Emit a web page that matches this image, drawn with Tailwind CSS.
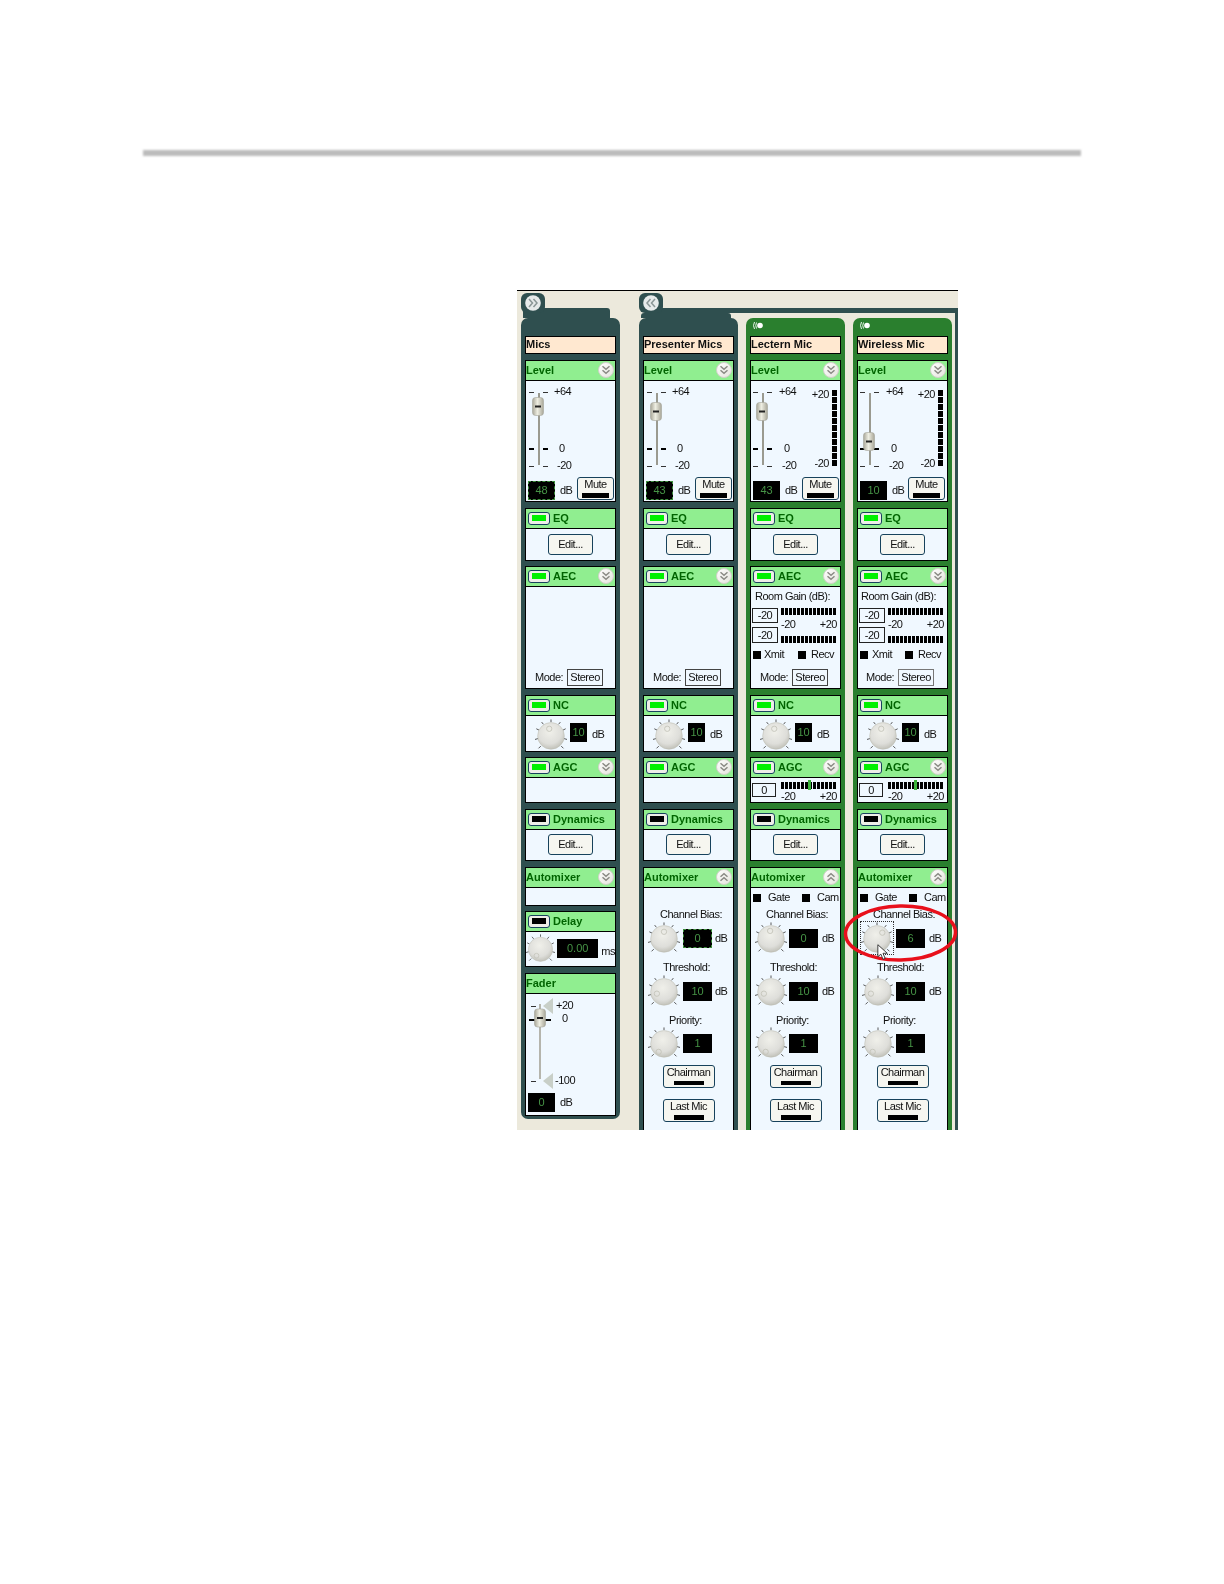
<!DOCTYPE html>
<html>
<head>
<meta charset="utf-8">
<script src="https://cdn.jsdelivr.net/npm/@tailwindcss/browser@4"></script>
</head>
<body class="bg-white">
<svg class="absolute w-0 h-0">
<defs>
<radialGradient id="kg" cx="45%" cy="35%" r="75%"><stop offset="0" stop-color="#f0f0ea"/><stop offset="0.6" stop-color="#dededa"/><stop offset="1" stop-color="#b4b4aa"/></radialGradient>
<linearGradient id="cg" x1="0" y1="0" x2="1" y2="1"><stop offset="0" stop-color="#ffffff"/><stop offset="1" stop-color="#e4e4dc"/></linearGradient>
<linearGradient id="tg" x1="0" y1="0" x2="1" y2="0"><stop offset="0" stop-color="#a8a698"/><stop offset="0.45" stop-color="#eeeee2"/><stop offset="1" stop-color="#a8a698"/></linearGradient>
<symbol id="knob" viewBox="0 0 36 36">
<path d="M18 .5v3M7.500 3.500l2 2.500M28.500 3.500l-2 2.500M1.500 11l3 1.500M34.500 11l-3 1.500M0 23l3.500-1M36 23l-3.500-1M4 33l2.500-2.500M32 33l-2.500-2.500" stroke="#444" stroke-width="1" fill="none"/>
<circle cx="18" cy="19" r="15" fill="url(#kg)" stroke="#bcbcb2" stroke-width=".6"/>
</symbol>
<symbol id="dn" viewBox="0 0 16 16"><circle cx="8" cy="8" r="7.500" fill="url(#cg)" stroke="#d0d0c8"/><path d="M4.500 4.300 8 7.300l3.500-3M4.500 8.300 8 11.300l3.500-3" fill="none" stroke="#8a8a84" stroke-width="1.500"/></symbol>
<symbol id="up" viewBox="0 0 16 16"><circle cx="8" cy="8" r="7.500" fill="url(#cg)" stroke="#d0d0c8"/><path d="M4.500 7.700 8 4.700l3.500 3M4.500 11.700 8 8.700l3.500 3" fill="none" stroke="#8a8a84" stroke-width="1.500"/></symbol>
<symbol id="rr" viewBox="0 0 16 16"><circle cx="8" cy="8" r="7.800" fill="#e6eaea"/><path d="M4 4l3.500 4L4 12M8.500 4 12 8l-3.500 4" fill="none" stroke="#8a9696" stroke-width="1.500"/></symbol>
<symbol id="ll" viewBox="0 0 16 16"><circle cx="8" cy="8" r="7.800" fill="#e6eaea"/><path d="M12 4 8.500 8l3.500 4M7.500 4 4 8l3.500 4" fill="none" stroke="#8a9696" stroke-width="1.500"/></symbol>
<symbol id="thumb" viewBox="0 0 12 19"><rect x=".5" y=".5" width="11" height="18" rx="3" fill="url(#tg)" stroke="#a5a59a" stroke-width=".6"/><rect x="3" y="8.500" width="6" height="2" fill="#222"/></symbol>
<symbol id="mic" viewBox="0 0 12 9"><path d="M2.500 1Q.5 4.500 2.500 8M4.500 1.500Q3 4.500 4.500 7.500" fill="none" stroke="#fff" stroke-width=".9"/><circle cx="8" cy="4.500" r="2.800" fill="#fff"/></symbol>
</defs>
</svg>
<div class="relative w-[1224px] h-[1584px] overflow-hidden bg-white font-['Liberation_Sans',sans-serif] text-[11px] tracking-[-0.5px] text-[#111] leading-[11px]">
<div class="ml-[143px] mt-[150px] w-[938px] h-[6px] bg-[#bcbcbc] blur-[0.8px]"></div>

<div class="relative ml-[517px] mt-[134px] w-[441px] h-[840px] overflow-hidden bg-[#ece9dc] border-t border-black flex blur-[0.35px]">

<!-- LEFT GROUP -->
<div class="w-[122px] pl-[4px] pt-[2px] shrink-0">
<div class="relative z-10 w-[24px] h-[20px] rounded-[6px] bg-[#2f4f4f] flex items-center justify-center"><svg class="w-[16px] h-[16px]"><use href="#rr"/></svg></div>
<div class="-mt-[5px] ml-[2px] w-[87px] h-[10px] rounded-t-[3px] bg-[#2f4f4f]"></div>
<!-- col 1 -->
<div class="w-[99px] h-[801px] rounded-[7px] bg-[#2f4f4f] px-[4px] pt-[18px]">
<div class="h-[18px] border border-black bg-[#ffe8d0] font-bold tracking-normal flex items-center pb-[1px]">Mics</div>

<div class="mt-[6px] h-[142px] border border-black bg-[#f0f8ff]">
<div class="h-[20px] pb-[1px] bg-[#90ee90] border-b border-black flex items-center justify-between pr-[1px] font-bold tracking-normal text-[#006400]">Level<svg class="w-[16px] h-[16px]"><use href="#dn"/></svg></div>
<div class="h-[96px] pl-[3px] pt-[5px] flex">
<div class="relative w-[22px] h-[85px]">
<div class="absolute left-[9px] top-[7px] w-[2px] h-[72px] bg-[#9a9a90]"></div>
<div class="absolute left-0 top-[6px] w-[19px] h-[1px] bg-[linear-gradient(90deg,#333_5px,transparent_5px_14px,#333_14px)]"></div>
<div class="absolute left-0 top-[62px] w-[19px] h-[2px] bg-[linear-gradient(90deg,#000_5px,transparent_5px_14px,#000_14px)]"></div>
<div class="absolute left-0 top-[80px] w-[19px] h-[1px] bg-[linear-gradient(90deg,#333_5px,transparent_5px_14px,#333_14px)]"></div>
<svg class="absolute left-[3px] top-[11px] w-[12px] h-[19px]"><use href="#thumb"/></svg>
</div>
<div class="w-[26px] pl-[3px]"><div>+64</div><div class="mt-[46px] pl-[5px]">0</div><div class="mt-[6px] pl-[3px]">-20</div></div>
</div>
<div class="flex pl-[2px]">
<div class="mt-[4px] w-[27px] h-[19px] bg-black text-[#469446] tracking-normal flex items-center justify-center border border-dashed border-[#3d8f3d]">48</div>
<div class="ml-[5px] mt-[8px] w-[17px]">dB</div>
<div class="w-[37px] h-[23px] rounded-[3px] border border-[#17425c] bg-[#f6f6f0] flex flex-col items-center pt-[1px]">Mute<div class="mt-[3px] w-[27px] h-[5px] bg-black"></div></div>
</div>
</div>

<div class="mt-[6px] h-[53px] border border-black bg-[#f0f8ff]">
<div class="h-[20px] pb-[1px] bg-[#90ee90] border-b border-black flex items-center pl-[2px] font-bold tracking-normal text-[#006400]"><div class="w-[22px] h-[13px] mr-[3px] rounded-[3px] border border-[#17425c] bg-[#eeeee8] flex items-center justify-center"><div class="w-[14px] h-[6px] bg-[#00f000]"></div></div>EQ</div>
<div class="flex justify-center pt-[5px]"><div class="w-[45px] h-[21px] rounded-[3px] border border-[#17425c] bg-[#f6f6f0] flex items-center justify-center">Edit...</div></div>
</div>

<div class="mt-[5px] h-[123px] border border-black bg-[#f0f8ff] flex flex-col">
<div class="h-[20px] pb-[1px] shrink-0 bg-[#90ee90] border-b border-black flex items-center justify-between pl-[2px] pr-[1px] font-bold tracking-normal text-[#006400]"><div class="flex items-center"><div class="w-[22px] h-[13px] mr-[3px] rounded-[3px] border border-[#17425c] bg-[#eeeee8] flex items-center justify-center"><div class="w-[14px] h-[6px] bg-[#00f000]"></div></div>AEC</div><svg class="w-[16px] h-[16px]"><use href="#dn"/></svg></div>
<div class="mt-auto mb-[2px] flex items-center pl-[9px]"><span class="mr-[4px]">Mode:</span><div class="w-[36px] h-[17px] border border-[#444] flex items-center justify-center">Stereo</div></div>
</div>

<div class="mt-[6px] h-[57px] border border-black bg-[#f0f8ff]">
<div class="h-[20px] pb-[1px] bg-[#90ee90] border-b border-black flex items-center pl-[2px] font-bold tracking-normal text-[#006400]"><div class="w-[22px] h-[13px] mr-[3px] rounded-[3px] border border-[#17425c] bg-[#eeeee8] flex items-center justify-center"><div class="w-[14px] h-[6px] bg-[#00f000]"></div></div>NC</div>
<div class="flex items-start pl-[8px] pt-[3px]"><svg class="w-[34px] h-[32px] shrink-0" viewBox="0 0 36 36"><use href="#knob" width="36" height="36"/><circle cx="16" cy="11" r="3" fill="none" stroke="#c4c4ba"/></svg><div class="ml-[2px] mt-[4px] w-[17px] h-[19px] bg-black text-[#469446] tracking-normal flex items-center justify-center">10</div><div class="ml-[5px] mt-[10px]">dB</div></div>
</div>

<div class="mt-[5px] h-[46px] border border-black bg-[#f0f8ff]">
<div class="h-[20px] pb-[1px] bg-[#90ee90] border-b border-black flex items-center justify-between pl-[2px] pr-[1px] font-bold tracking-normal text-[#006400]"><div class="flex items-center"><div class="w-[22px] h-[13px] mr-[3px] rounded-[3px] border border-[#17425c] bg-[#eeeee8] flex items-center justify-center"><div class="w-[14px] h-[6px] bg-[#00f000]"></div></div>AGC</div><svg class="w-[16px] h-[16px]"><use href="#dn"/></svg></div>
</div>

<div class="mt-[6px] h-[52px] border border-black bg-[#f0f8ff]">
<div class="h-[20px] pb-[1px] bg-[#90ee90] border-b border-black flex items-center pl-[2px] font-bold tracking-normal text-[#006400]"><div class="w-[22px] h-[13px] mr-[3px] rounded-[3px] border border-[#17425c] bg-[#eeeee8] flex items-center justify-center"><div class="w-[14px] h-[6px] bg-black"></div></div>Dynamics</div>
<div class="flex justify-center pt-[4px]"><div class="w-[45px] h-[21px] rounded-[3px] border border-[#17425c] bg-[#f6f6f0] flex items-center justify-center">Edit...</div></div>
</div>

<div class="mt-[6px] h-[39px] border border-black bg-[#f0f8ff]">
<div class="h-[20px] pb-[1px] bg-[#90ee90] border-b border-black flex items-center justify-between pr-[1px] font-bold tracking-normal text-[#006400]">Automixer<svg class="w-[16px] h-[16px]"><use href="#dn"/></svg></div>
</div>

<div class="mt-[5px] h-[56px] border border-black bg-[#f0f8ff]">
<div class="h-[20px] pb-[1px] bg-[#90ee90] border-b border-black flex items-center pl-[2px] font-bold tracking-normal text-[#006400]"><div class="w-[22px] h-[13px] mr-[3px] rounded-[3px] border border-[#17425c] bg-[#eeeee8] flex items-center justify-center"><div class="w-[14px] h-[6px] bg-black"></div></div>Delay</div>
<div class="flex items-start pt-[2px]"><svg class="w-[29px] h-[29px] shrink-0" viewBox="0 0 36 36"><use href="#knob" width="36" height="36"/><circle cx="13" cy="27" r="3" fill="none" stroke="#c4c4ba"/></svg><div class="ml-[2px] mt-[5px] w-[42px] h-[19px] bg-black text-[#469446] tracking-normal flex items-center justify-center">0.00</div><div class="ml-[3px] mt-[12px]">ms</div></div>
</div>

<div class="mt-[6px] h-[143px] border border-black bg-[#f0f8ff]">
<div class="h-[20px] pb-[1px] bg-[#90ee90] border-b border-black flex items-center font-bold tracking-normal text-[#006400]">Fader</div>
<div class="relative h-[99px]">
<div class="absolute left-[3px] top-[25px] w-[22px] h-[2px] bg-[linear-gradient(90deg,#000_6px,transparent_6px_16px,#000_16px)]"></div>
<div class="absolute left-[13px] top-[10px] w-[2px] h-[75px] bg-[#b5b5ad]"></div>
<div class="absolute left-[5px] top-[12px] w-[5px] h-[1px] bg-[#333]"></div>
<div class="absolute left-[5px] top-[87px] w-[5px] h-[1px] bg-[#333]"></div>
<svg class="absolute left-[17px] top-[4px] w-[10px] h-[16px]"><path d="M10 0V16L0 8Z" fill="#c8cfc8"/></svg>
<svg class="absolute left-[17px] top-[79px] w-[10px] h-[16px]"><path d="M10 0V16L0 8Z" fill="#c8cfc8"/></svg>
<svg class="absolute left-[8px] top-[13px] w-[12px] h-[22px]"><use href="#thumb"/></svg>
<div class="absolute left-[30px] top-[6px]">+20</div>
<div class="absolute left-[36px] top-[19px]">0</div>
<div class="absolute left-[29px] top-[81px]">-100</div>
</div>
<div class="flex items-center pl-[2px]"><div class="w-[27px] h-[19px] bg-black text-[#469446] tracking-normal flex items-center justify-center">0</div><div class="ml-[5px]">dB</div></div>
</div>
</div>
</div>

<!-- RIGHT GROUP -->
<div class="relative w-[319px] pt-[2px] shrink-0">
<div class="relative z-10 w-[24px] h-[20px] rounded-[6px] bg-[#2f4f4f] flex items-center justify-center"><svg class="w-[16px] h-[16px]"><use href="#ll"/></svg></div>
<div class="-mt-[5px] ml-[8px] h-[5px] bg-[#2f4f4f]"></div>
<div class="ml-[2px] w-[90px] h-[5px] rounded-t-[3px] bg-[#2f4f4f]"></div>
<div class="flex">

<!-- col 2 -->
<div class="w-[99px] h-[820px] rounded-t-[7px] bg-[#2f4f4f] px-[4px] pt-[18px] shrink-0">
<div class="h-[18px] border border-black bg-[#ffe8d0] font-bold tracking-normal flex items-center pb-[1px]">Presenter Mics</div>
<div class="mt-[6px] h-[142px] border border-black bg-[#f0f8ff]">
<div class="h-[20px] pb-[1px] bg-[#90ee90] border-b border-black flex items-center justify-between pr-[1px] font-bold tracking-normal text-[#006400]">Level<svg class="w-[16px] h-[16px]"><use href="#dn"/></svg></div>
<div class="h-[96px] pl-[3px] pt-[5px] flex">
<div class="relative w-[22px] h-[85px]">
<div class="absolute left-[9px] top-[7px] w-[2px] h-[72px] bg-[#9a9a90]"></div>
<div class="absolute left-0 top-[6px] w-[19px] h-[1px] bg-[linear-gradient(90deg,#333_5px,transparent_5px_14px,#333_14px)]"></div>
<div class="absolute left-0 top-[62px] w-[19px] h-[2px] bg-[linear-gradient(90deg,#000_5px,transparent_5px_14px,#000_14px)]"></div>
<div class="absolute left-0 top-[80px] w-[19px] h-[1px] bg-[linear-gradient(90deg,#333_5px,transparent_5px_14px,#333_14px)]"></div>
<svg class="absolute left-[3px] top-[16px] w-[12px] h-[19px]"><use href="#thumb"/></svg>
</div>
<div class="w-[26px] pl-[3px]"><div>+64</div><div class="mt-[46px] pl-[5px]">0</div><div class="mt-[6px] pl-[3px]">-20</div></div>
</div>
<div class="flex pl-[2px]">
<div class="mt-[4px] w-[27px] h-[19px] bg-black text-[#469446] tracking-normal flex items-center justify-center border border-dashed border-[#3d8f3d]">43</div>
<div class="ml-[5px] mt-[8px] w-[17px]">dB</div>
<div class="w-[37px] h-[23px] rounded-[3px] border border-[#17425c] bg-[#f6f6f0] flex flex-col items-center pt-[1px]">Mute<div class="mt-[3px] w-[27px] h-[5px] bg-black"></div></div>
</div>
</div>
<div class="mt-[6px] h-[53px] border border-black bg-[#f0f8ff]">
<div class="h-[20px] pb-[1px] bg-[#90ee90] border-b border-black flex items-center pl-[2px] font-bold tracking-normal text-[#006400]"><div class="w-[22px] h-[13px] mr-[3px] rounded-[3px] border border-[#17425c] bg-[#eeeee8] flex items-center justify-center"><div class="w-[14px] h-[6px] bg-[#00f000]"></div></div>EQ</div>
<div class="flex justify-center pt-[5px]"><div class="w-[45px] h-[21px] rounded-[3px] border border-[#17425c] bg-[#f6f6f0] flex items-center justify-center">Edit...</div></div>
</div>
<div class="mt-[5px] h-[123px] border border-black bg-[#f0f8ff] flex flex-col">
<div class="h-[20px] pb-[1px] shrink-0 bg-[#90ee90] border-b border-black flex items-center justify-between pl-[2px] pr-[1px] font-bold tracking-normal text-[#006400]"><div class="flex items-center"><div class="w-[22px] h-[13px] mr-[3px] rounded-[3px] border border-[#17425c] bg-[#eeeee8] flex items-center justify-center"><div class="w-[14px] h-[6px] bg-[#00f000]"></div></div>AEC</div><svg class="w-[16px] h-[16px]"><use href="#dn"/></svg></div>
<div class="mt-auto mb-[2px] flex items-center pl-[9px]"><span class="mr-[4px]">Mode:</span><div class="w-[36px] h-[17px] border border-[#444] flex items-center justify-center">Stereo</div></div>
</div>
<div class="mt-[6px] h-[57px] border border-black bg-[#f0f8ff]">
<div class="h-[20px] pb-[1px] bg-[#90ee90] border-b border-black flex items-center pl-[2px] font-bold tracking-normal text-[#006400]"><div class="w-[22px] h-[13px] mr-[3px] rounded-[3px] border border-[#17425c] bg-[#eeeee8] flex items-center justify-center"><div class="w-[14px] h-[6px] bg-[#00f000]"></div></div>NC</div>
<div class="flex items-start pl-[8px] pt-[3px]"><svg class="w-[34px] h-[32px] shrink-0" viewBox="0 0 36 36"><use href="#knob" width="36" height="36"/><circle cx="16" cy="11" r="3" fill="none" stroke="#c4c4ba"/></svg><div class="ml-[2px] mt-[4px] w-[17px] h-[19px] bg-black text-[#469446] tracking-normal flex items-center justify-center">10</div><div class="ml-[5px] mt-[10px]">dB</div></div>
</div>
<div class="mt-[5px] h-[46px] border border-black bg-[#f0f8ff]">
<div class="h-[20px] pb-[1px] bg-[#90ee90] border-b border-black flex items-center justify-between pl-[2px] pr-[1px] font-bold tracking-normal text-[#006400]"><div class="flex items-center"><div class="w-[22px] h-[13px] mr-[3px] rounded-[3px] border border-[#17425c] bg-[#eeeee8] flex items-center justify-center"><div class="w-[14px] h-[6px] bg-[#00f000]"></div></div>AGC</div><svg class="w-[16px] h-[16px]"><use href="#dn"/></svg></div>
</div>
<div class="mt-[6px] h-[52px] border border-black bg-[#f0f8ff]">
<div class="h-[20px] pb-[1px] bg-[#90ee90] border-b border-black flex items-center pl-[2px] font-bold tracking-normal text-[#006400]"><div class="w-[22px] h-[13px] mr-[3px] rounded-[3px] border border-[#17425c] bg-[#eeeee8] flex items-center justify-center"><div class="w-[14px] h-[6px] bg-black"></div></div>Dynamics</div>
<div class="flex justify-center pt-[4px]"><div class="w-[45px] h-[21px] rounded-[3px] border border-[#17425c] bg-[#f6f6f0] flex items-center justify-center">Edit...</div></div>
</div>
<div class="mt-[6px] h-[290px] border border-black bg-[#f0f8ff]">
<div class="h-[20px] pb-[1px] bg-[#90ee90] border-b border-black flex items-center justify-between pr-[1px] font-bold tracking-normal text-[#006400]">Automixer<svg class="w-[16px] h-[16px]"><use href="#up"/></svg></div>
<div class="h-[19px]"></div>
<div class="h-[15px] pt-[2px] text-center pl-[5px]">Channel Bias:</div>
<div class="h-[32px] flex items-center pl-[3px]"><svg class="w-[34px] h-[32px] shrink-0" viewBox="0 0 36 36"><use href="#knob" width="36" height="36"/><circle cx="18" cy="11" r="3" fill="none" stroke="#c4c4ba"/></svg><div class="ml-[2px] w-[29px] h-[19px] bg-black text-[#469446] tracking-normal flex items-center justify-center border border-dashed border-[#3d8f3d]">0</div><div class="ml-[3px]">dB</div></div>
<div class="h-[21px] pt-[8px] text-center pr-[4px]">Threshold:</div>
<div class="h-[32px] flex items-center pl-[3px]"><svg class="w-[34px] h-[32px] shrink-0" viewBox="0 0 36 36"><use href="#knob" width="36" height="36"/><circle cx="10" cy="21" r="3" fill="none" stroke="#c4c4ba"/></svg><div class="ml-[2px] w-[29px] h-[19px] bg-black text-[#469446] tracking-normal flex items-center justify-center">10</div><div class="ml-[3px]">dB</div></div>
<div class="h-[20px] pt-[8px] text-center pr-[6px]">Priority:</div>
<div class="h-[32px] flex items-center pl-[3px]"><svg class="w-[34px] h-[32px] shrink-0" viewBox="0 0 36 36"><use href="#knob" width="36" height="36"/><circle cx="12" cy="28" r="3" fill="none" stroke="#c4c4ba"/></svg><div class="ml-[2px] w-[29px] h-[19px] bg-black text-[#469446] tracking-normal flex items-center justify-center">1</div></div>
<div class="mx-auto mt-[6px] w-[52px] h-[23px] rounded-[3px] border border-[#17425c] bg-[#f6f6f0] flex flex-col items-center pt-[1px]">Chairman<div class="mt-[3px] w-[30px] h-[4px] bg-black"></div></div>
<div class="mx-auto mt-[11px] w-[52px] h-[23px] rounded-[3px] border border-[#17425c] bg-[#f6f6f0] flex flex-col items-center pt-[1px]">Last Mic<div class="mt-[3px] w-[30px] h-[5px] bg-black"></div></div>
</div>
</div>

<!-- col 3 -->
<div class="ml-[8px] w-[99px] h-[820px] rounded-t-[7px] bg-[#2a7f2e] px-[4px] pt-[3px] shrink-0">
<svg class="ml-[2px] w-[12px] h-[9px]"><use href="#mic"/></svg>
<div class="mt-[6px] h-[18px] border border-black bg-[#ffe8d0] font-bold tracking-normal flex items-center pb-[1px]">Lectern Mic</div>
<div class="mt-[6px] h-[142px] border border-black bg-[#f0f8ff]">
<div class="h-[20px] pb-[1px] bg-[#90ee90] border-b border-black flex items-center justify-between pr-[1px] font-bold tracking-normal text-[#006400]">Level<svg class="w-[16px] h-[16px]"><use href="#dn"/></svg></div>
<div class="h-[96px] pl-[2px] pt-[5px] flex">
<div class="relative w-[22px] h-[85px]">
<div class="absolute left-[9px] top-[7px] w-[2px] h-[72px] bg-[#9a9a90]"></div>
<div class="absolute left-0 top-[6px] w-[19px] h-[1px] bg-[linear-gradient(90deg,#333_5px,transparent_5px_14px,#333_14px)]"></div>
<div class="absolute left-0 top-[62px] w-[19px] h-[2px] bg-[linear-gradient(90deg,#000_5px,transparent_5px_14px,#000_14px)]"></div>
<div class="absolute left-0 top-[80px] w-[19px] h-[1px] bg-[linear-gradient(90deg,#333_5px,transparent_5px_14px,#333_14px)]"></div>
<svg class="absolute left-[3px] top-[16px] w-[12px] h-[19px]"><use href="#thumb"/></svg>
</div>
<div class="w-[26px] pl-[4px]"><div>+64</div><div class="mt-[46px] pl-[5px]">0</div><div class="mt-[6px] pl-[3px]">-20</div></div>
<div class="w-[11px]"></div>
<div class="w-[17px] h-[83px] pt-[3px] flex flex-col justify-between items-end"><div>+20</div><div>-20</div></div>
<div class="ml-[3px] mt-[4px] w-[5px] h-[76px] bg-[repeating-linear-gradient(180deg,#000_0_6px,#f0f8ff_6px_7px)]"></div>
</div>
<div class="flex pl-[2px]">
<div class="mt-[4px] w-[27px] h-[19px] bg-black text-[#469446] tracking-normal flex items-center justify-center">43</div>
<div class="ml-[5px] mt-[8px] w-[17px]">dB</div>
<div class="w-[37px] h-[23px] rounded-[3px] border border-[#17425c] bg-[#f6f6f0] flex flex-col items-center pt-[1px]">Mute<div class="mt-[3px] w-[27px] h-[5px] bg-black"></div></div>
</div>
</div>
<div class="mt-[6px] h-[53px] border border-black bg-[#f0f8ff]">
<div class="h-[20px] pb-[1px] bg-[#90ee90] border-b border-black flex items-center pl-[2px] font-bold tracking-normal text-[#006400]"><div class="w-[22px] h-[13px] mr-[3px] rounded-[3px] border border-[#17425c] bg-[#eeeee8] flex items-center justify-center"><div class="w-[14px] h-[6px] bg-[#00f000]"></div></div>EQ</div>
<div class="flex justify-center pt-[5px]"><div class="w-[45px] h-[21px] rounded-[3px] border border-[#17425c] bg-[#f6f6f0] flex items-center justify-center">Edit...</div></div>
</div>
<div class="mt-[5px] h-[123px] border border-black bg-[#f0f8ff] flex flex-col">
<div class="h-[20px] pb-[1px] shrink-0 bg-[#90ee90] border-b border-black flex items-center justify-between pl-[2px] pr-[1px] font-bold tracking-normal text-[#006400]"><div class="flex items-center"><div class="w-[22px] h-[13px] mr-[3px] rounded-[3px] border border-[#17425c] bg-[#eeeee8] flex items-center justify-center"><div class="w-[14px] h-[6px] bg-[#00f000]"></div></div>AEC</div><svg class="w-[16px] h-[16px]"><use href="#dn"/></svg></div>
<div class="h-[16px] pl-[4px] pt-[4px]">Room Gain (dB):</div>
<div class="relative mt-[5px] h-[35px] pl-[1px]">
<div class="w-[26px] h-[15px] border border-[#222] flex items-center justify-center">-20</div>
<div class="mt-[4px] w-[26px] h-[16px] border border-[#222] flex items-center justify-center">-20</div>
<div class="absolute left-[30px] top-0 w-[56px] h-[7px] bg-[repeating-linear-gradient(90deg,#000_0_3px,transparent_3px_4px)]"></div>
<div class="absolute left-[30px] top-[11px] w-[56px] flex justify-between"><span>-20</span><span>+20</span></div>
<div class="absolute left-[30px] top-[28px] w-[56px] h-[7px] bg-[repeating-linear-gradient(90deg,#000_0_3px,transparent_3px_4px)]"></div>
</div>
<div class="flex items-center pl-[2px] mt-[6px]"><div class="w-[8px] h-[8px] bg-black mr-[3px]"></div><span class="w-[34px]">Xmit</span><div class="w-[8px] h-[8px] bg-black mr-[5px]"></div>Recv</div>
<div class="mt-auto mb-[2px] flex items-center pl-[9px]"><span class="mr-[4px]">Mode:</span><div class="w-[36px] h-[17px] border border-[#444] flex items-center justify-center">Stereo</div></div>
</div>
<div class="mt-[6px] h-[57px] border border-black bg-[#f0f8ff]">
<div class="h-[20px] pb-[1px] bg-[#90ee90] border-b border-black flex items-center pl-[2px] font-bold tracking-normal text-[#006400]"><div class="w-[22px] h-[13px] mr-[3px] rounded-[3px] border border-[#17425c] bg-[#eeeee8] flex items-center justify-center"><div class="w-[14px] h-[6px] bg-[#00f000]"></div></div>NC</div>
<div class="flex items-start pl-[8px] pt-[3px]"><svg class="w-[34px] h-[32px] shrink-0" viewBox="0 0 36 36"><use href="#knob" width="36" height="36"/><circle cx="16" cy="11" r="3" fill="none" stroke="#c4c4ba"/></svg><div class="ml-[2px] mt-[4px] w-[17px] h-[19px] bg-black text-[#469446] tracking-normal flex items-center justify-center">10</div><div class="ml-[5px] mt-[10px]">dB</div></div>
</div>
<div class="mt-[5px] h-[46px] border border-black bg-[#f0f8ff]">
<div class="h-[20px] pb-[1px] bg-[#90ee90] border-b border-black flex items-center justify-between pl-[2px] pr-[1px] font-bold tracking-normal text-[#006400]"><div class="flex items-center"><div class="w-[22px] h-[13px] mr-[3px] rounded-[3px] border border-[#17425c] bg-[#eeeee8] flex items-center justify-center"><div class="w-[14px] h-[6px] bg-[#00f000]"></div></div>AGC</div><svg class="w-[16px] h-[16px]"><use href="#dn"/></svg></div>
<div class="relative h-[25px] pl-[1px] pt-[5px]"><div class="w-[24px] h-[14px] border border-[#222] flex items-center justify-center">0</div>
<div class="absolute left-[30px] top-[4px] w-[56px] h-[7px] bg-[repeating-linear-gradient(90deg,#000_0_3px,transparent_3px_4px)]"></div>
<div class="absolute left-[57px] top-[2px] w-[3px] h-[10px] bg-[#3cb43c]"></div>
<div class="absolute left-[30px] top-[13px] w-[56px] flex justify-between"><span>-20</span><span>+20</span></div></div>
</div>
<div class="mt-[6px] h-[52px] border border-black bg-[#f0f8ff]">
<div class="h-[20px] pb-[1px] bg-[#90ee90] border-b border-black flex items-center pl-[2px] font-bold tracking-normal text-[#006400]"><div class="w-[22px] h-[13px] mr-[3px] rounded-[3px] border border-[#17425c] bg-[#eeeee8] flex items-center justify-center"><div class="w-[14px] h-[6px] bg-black"></div></div>Dynamics</div>
<div class="flex justify-center pt-[4px]"><div class="w-[45px] h-[21px] rounded-[3px] border border-[#17425c] bg-[#f6f6f0] flex items-center justify-center">Edit...</div></div>
</div>
<div class="mt-[6px] h-[290px] border border-black bg-[#f0f8ff]">
<div class="h-[20px] pb-[1px] bg-[#90ee90] border-b border-black flex items-center justify-between pr-[1px] font-bold tracking-normal text-[#006400]">Automixer<svg class="w-[16px] h-[16px]"><use href="#up"/></svg></div>
<div class="h-[19px] flex items-center pl-[2px]"><div class="w-[8px] h-[8px] bg-black mr-[7px]"></div><span class="w-[34px]">Gate</span><div class="w-[8px] h-[8px] bg-black mr-[7px]"></div>Cam</div>
<div class="h-[15px] pt-[2px] text-center pl-[3px]">Channel Bias:</div>
<div class="h-[32px] flex items-center pl-[3px]"><svg class="w-[34px] h-[32px] shrink-0" viewBox="0 0 36 36"><use href="#knob" width="36" height="36"/><circle cx="17" cy="10" r="3" fill="none" stroke="#c4c4ba"/></svg><div class="ml-[1px] w-[29px] h-[19px] bg-black text-[#469446] tracking-normal flex items-center justify-center">0</div><div class="ml-[4px]">dB</div></div>
<div class="h-[21px] pt-[8px] text-center pr-[4px]">Threshold:</div>
<div class="h-[32px] flex items-center pl-[3px]"><svg class="w-[34px] h-[32px] shrink-0" viewBox="0 0 36 36"><use href="#knob" width="36" height="36"/><circle cx="10" cy="21" r="3" fill="none" stroke="#c4c4ba"/></svg><div class="ml-[1px] w-[29px] h-[19px] bg-black text-[#469446] tracking-normal flex items-center justify-center">10</div><div class="ml-[4px]">dB</div></div>
<div class="h-[20px] pt-[8px] text-center pr-[6px]">Priority:</div>
<div class="h-[32px] flex items-center pl-[3px]"><svg class="w-[34px] h-[32px] shrink-0" viewBox="0 0 36 36"><use href="#knob" width="36" height="36"/><circle cx="12" cy="28" r="3" fill="none" stroke="#c4c4ba"/></svg><div class="ml-[1px] w-[29px] h-[19px] bg-black text-[#469446] tracking-normal flex items-center justify-center">1</div></div>
<div class="mx-auto mt-[6px] w-[52px] h-[23px] rounded-[3px] border border-[#17425c] bg-[#f6f6f0] flex flex-col items-center pt-[1px]">Chairman<div class="mt-[3px] w-[30px] h-[4px] bg-black"></div></div>
<div class="mx-auto mt-[11px] w-[52px] h-[23px] rounded-[3px] border border-[#17425c] bg-[#f6f6f0] flex flex-col items-center pt-[1px]">Last Mic<div class="mt-[3px] w-[30px] h-[5px] bg-black"></div></div>
</div>
</div>

<!-- col 4 -->
<div class="ml-[8px] w-[99px] h-[820px] rounded-t-[7px] bg-[#2a7f2e] px-[4px] pt-[3px] shrink-0">
<svg class="ml-[2px] w-[12px] h-[9px]"><use href="#mic"/></svg>
<div class="mt-[6px] h-[18px] border border-black bg-[#ffe8d0] font-bold tracking-normal flex items-center pb-[1px]">Wireless Mic</div>
<div class="mt-[6px] h-[142px] border border-black bg-[#f0f8ff]">
<div class="h-[20px] pb-[1px] bg-[#90ee90] border-b border-black flex items-center justify-between pr-[1px] font-bold tracking-normal text-[#006400]">Level<svg class="w-[16px] h-[16px]"><use href="#dn"/></svg></div>
<div class="h-[96px] pl-[2px] pt-[5px] flex">
<div class="relative w-[22px] h-[85px]">
<div class="absolute left-[9px] top-[7px] w-[2px] h-[72px] bg-[#9a9a90]"></div>
<div class="absolute left-0 top-[6px] w-[19px] h-[1px] bg-[linear-gradient(90deg,#333_5px,transparent_5px_14px,#333_14px)]"></div>
<div class="absolute left-0 top-[62px] w-[19px] h-[2px] bg-[linear-gradient(90deg,#000_5px,transparent_5px_14px,#000_14px)]"></div>
<div class="absolute left-0 top-[80px] w-[19px] h-[1px] bg-[linear-gradient(90deg,#333_5px,transparent_5px_14px,#333_14px)]"></div>
<svg class="absolute left-[3px] top-[46px] w-[12px] h-[19px]"><use href="#thumb"/></svg>
</div>
<div class="w-[26px] pl-[4px]"><div>+64</div><div class="mt-[46px] pl-[5px]">0</div><div class="mt-[6px] pl-[3px]">-20</div></div>
<div class="w-[10px]"></div>
<div class="w-[17px] h-[83px] pt-[3px] flex flex-col justify-between items-end"><div>+20</div><div>-20</div></div>
<div class="ml-[3px] mt-[4px] w-[5px] h-[76px] bg-[repeating-linear-gradient(180deg,#000_0_6px,#f0f8ff_6px_7px)]"></div>
</div>
<div class="flex pl-[2px]">
<div class="mt-[4px] w-[27px] h-[19px] bg-black text-[#469446] tracking-normal flex items-center justify-center">10</div>
<div class="ml-[5px] mt-[8px] w-[16px]">dB</div>
<div class="w-[37px] h-[23px] rounded-[3px] border border-[#17425c] bg-[#f6f6f0] flex flex-col items-center pt-[1px]">Mute<div class="mt-[3px] w-[27px] h-[5px] bg-black"></div></div>
</div>
</div>
<div class="mt-[6px] h-[53px] border border-black bg-[#f0f8ff]">
<div class="h-[20px] pb-[1px] bg-[#90ee90] border-b border-black flex items-center pl-[2px] font-bold tracking-normal text-[#006400]"><div class="w-[22px] h-[13px] mr-[3px] rounded-[3px] border border-[#17425c] bg-[#eeeee8] flex items-center justify-center"><div class="w-[14px] h-[6px] bg-[#00f000]"></div></div>EQ</div>
<div class="flex justify-center pt-[5px]"><div class="w-[45px] h-[21px] rounded-[3px] border border-[#17425c] bg-[#f6f6f0] flex items-center justify-center">Edit...</div></div>
</div>
<div class="mt-[5px] h-[123px] border border-black bg-[#f0f8ff] flex flex-col">
<div class="h-[20px] pb-[1px] shrink-0 bg-[#90ee90] border-b border-black flex items-center justify-between pl-[2px] pr-[1px] font-bold tracking-normal text-[#006400]"><div class="flex items-center"><div class="w-[22px] h-[13px] mr-[3px] rounded-[3px] border border-[#17425c] bg-[#eeeee8] flex items-center justify-center"><div class="w-[14px] h-[6px] bg-[#00f000]"></div></div>AEC</div><svg class="w-[16px] h-[16px]"><use href="#dn"/></svg></div>
<div class="h-[16px] pl-[3px] pt-[4px]">Room Gain (dB):</div>
<div class="relative mt-[5px] h-[35px] pl-[1px]">
<div class="w-[26px] h-[15px] border border-[#222] flex items-center justify-center">-20</div>
<div class="mt-[4px] w-[26px] h-[16px] border border-[#222] flex items-center justify-center">-20</div>
<div class="absolute left-[30px] top-0 w-[56px] h-[7px] bg-[repeating-linear-gradient(90deg,#000_0_3px,transparent_3px_4px)]"></div>
<div class="absolute left-[30px] top-[11px] w-[56px] flex justify-between"><span>-20</span><span>+20</span></div>
<div class="absolute left-[30px] top-[28px] w-[56px] h-[7px] bg-[repeating-linear-gradient(90deg,#000_0_3px,transparent_3px_4px)]"></div>
</div>
<div class="flex items-center pl-[2px] mt-[6px]"><div class="w-[8px] h-[8px] bg-black mr-[4px]"></div><span class="w-[33px]">Xmit</span><div class="w-[8px] h-[8px] bg-black mr-[5px]"></div>Recv</div>
<div class="mt-auto mb-[2px] flex items-center pl-[8px]"><span class="mr-[4px]">Mode:</span><div class="w-[36px] h-[17px] border border-[#777] flex items-center justify-center">Stereo</div></div>
</div>
<div class="mt-[6px] h-[57px] border border-black bg-[#f0f8ff]">
<div class="h-[20px] pb-[1px] bg-[#90ee90] border-b border-black flex items-center pl-[2px] font-bold tracking-normal text-[#006400]"><div class="w-[22px] h-[13px] mr-[3px] rounded-[3px] border border-[#17425c] bg-[#eeeee8] flex items-center justify-center"><div class="w-[14px] h-[6px] bg-[#00f000]"></div></div>NC</div>
<div class="flex items-start pl-[8px] pt-[3px]"><svg class="w-[34px] h-[32px] shrink-0" viewBox="0 0 36 36"><use href="#knob" width="36" height="36"/><circle cx="16" cy="11" r="3" fill="none" stroke="#c4c4ba"/></svg><div class="ml-[2px] mt-[4px] w-[17px] h-[19px] bg-black text-[#469446] tracking-normal flex items-center justify-center">10</div><div class="ml-[5px] mt-[10px]">dB</div></div>
</div>
<div class="mt-[5px] h-[46px] border border-black bg-[#f0f8ff]">
<div class="h-[20px] pb-[1px] bg-[#90ee90] border-b border-black flex items-center justify-between pl-[2px] pr-[1px] font-bold tracking-normal text-[#006400]"><div class="flex items-center"><div class="w-[22px] h-[13px] mr-[3px] rounded-[3px] border border-[#17425c] bg-[#eeeee8] flex items-center justify-center"><div class="w-[14px] h-[6px] bg-[#00f000]"></div></div>AGC</div><svg class="w-[16px] h-[16px]"><use href="#dn"/></svg></div>
<div class="relative h-[25px] pl-[1px] pt-[5px]"><div class="w-[24px] h-[14px] border border-[#222] flex items-center justify-center">0</div>
<div class="absolute left-[30px] top-[4px] w-[56px] h-[7px] bg-[repeating-linear-gradient(90deg,#000_0_3px,transparent_3px_4px)]"></div>
<div class="absolute left-[56px] top-[2px] w-[3px] h-[10px] bg-[#3cb43c]"></div>
<div class="absolute left-[30px] top-[13px] w-[56px] flex justify-between"><span>-20</span><span>+20</span></div></div>
</div>
<div class="mt-[6px] h-[52px] border border-black bg-[#f0f8ff]">
<div class="h-[20px] pb-[1px] bg-[#90ee90] border-b border-black flex items-center pl-[2px] font-bold tracking-normal text-[#006400]"><div class="w-[22px] h-[13px] mr-[3px] rounded-[3px] border border-[#17425c] bg-[#eeeee8] flex items-center justify-center"><div class="w-[14px] h-[6px] bg-black"></div></div>Dynamics</div>
<div class="flex justify-center pt-[4px]"><div class="w-[45px] h-[21px] rounded-[3px] border border-[#17425c] bg-[#f6f6f0] flex items-center justify-center">Edit...</div></div>
</div>
<div class="mt-[6px] h-[290px] border border-black bg-[#f0f8ff]">
<div class="h-[20px] pb-[1px] bg-[#90ee90] border-b border-black flex items-center justify-between pr-[1px] font-bold tracking-normal text-[#006400]">Automixer<svg class="w-[16px] h-[16px]"><use href="#up"/></svg></div>
<div class="h-[19px] flex items-center pl-[2px]"><div class="w-[8px] h-[8px] bg-black mr-[7px]"></div><span class="w-[34px]">Gate</span><div class="w-[8px] h-[8px] bg-black mr-[7px]"></div>Cam</div>
<div class="h-[15px] pt-[2px] text-center pl-[3px]">Channel Bias:</div>
<div class="h-[32px] flex items-center pl-[2px]"><div class="w-[34px] h-[34px] shrink-0 border border-dotted border-[#333] flex items-center justify-center"><svg class="w-[32px] h-[32px] shrink-0" viewBox="0 0 36 36"><use href="#knob" width="36" height="36"/><circle cx="24" cy="12" r="3" fill="none" stroke="#c4c4ba"/></svg></div><div class="ml-[2px] w-[29px] h-[19px] bg-black text-[#469446] tracking-normal flex items-center justify-center">6</div><div class="ml-[4px]">dB</div></div>
<div class="h-[21px] pt-[8px] text-center pr-[4px]">Threshold:</div>
<div class="h-[32px] flex items-center pl-[3px]"><svg class="w-[34px] h-[32px] shrink-0" viewBox="0 0 36 36"><use href="#knob" width="36" height="36"/><circle cx="10" cy="21" r="3" fill="none" stroke="#c4c4ba"/></svg><div class="ml-[1px] w-[29px] h-[19px] bg-black text-[#469446] tracking-normal flex items-center justify-center">10</div><div class="ml-[4px]">dB</div></div>
<div class="h-[20px] pt-[8px] text-center pr-[6px]">Priority:</div>
<div class="h-[32px] flex items-center pl-[3px]"><svg class="w-[34px] h-[32px] shrink-0" viewBox="0 0 36 36"><use href="#knob" width="36" height="36"/><circle cx="12" cy="28" r="3" fill="none" stroke="#c4c4ba"/></svg><div class="ml-[1px] w-[29px] h-[19px] bg-black text-[#469446] tracking-normal flex items-center justify-center">1</div></div>
<div class="mx-auto mt-[6px] w-[52px] h-[23px] rounded-[3px] border border-[#17425c] bg-[#f6f6f0] flex flex-col items-center pt-[1px]">Chairman<div class="mt-[3px] w-[30px] h-[4px] bg-black"></div></div>
<div class="mx-auto mt-[11px] w-[52px] h-[23px] rounded-[3px] border border-[#17425c] bg-[#f6f6f0] flex flex-col items-center pt-[1px]">Last Mic<div class="mt-[3px] w-[30px] h-[5px] bg-black"></div></div>
</div>
</div>

<div class="ml-[3px] w-[3px] -mt-[10px] h-[830px] bg-[#2f4f4f] shrink-0"></div>
</div>
</div>
</div>

<!-- highlight overlay -->
<svg class="absolute left-[843px] top-[903px] w-[115px] h-[60px]" viewBox="0 0 115 60"><ellipse cx="57.500" cy="30" rx="55" ry="27" transform="rotate(-1 57.500 30)" fill="none" stroke="#e8101c" stroke-width="3.500"/></svg>
<svg class="absolute left-[877px] top-[943px] w-[12px] h-[18px]" viewBox="0 0 14 19"><path d="M1 1v14l3.500-3 2.500 6 2.500-1-2.500-6h5z" fill="#fff" stroke="#222"/></svg>
</div>
</body>
</html>
